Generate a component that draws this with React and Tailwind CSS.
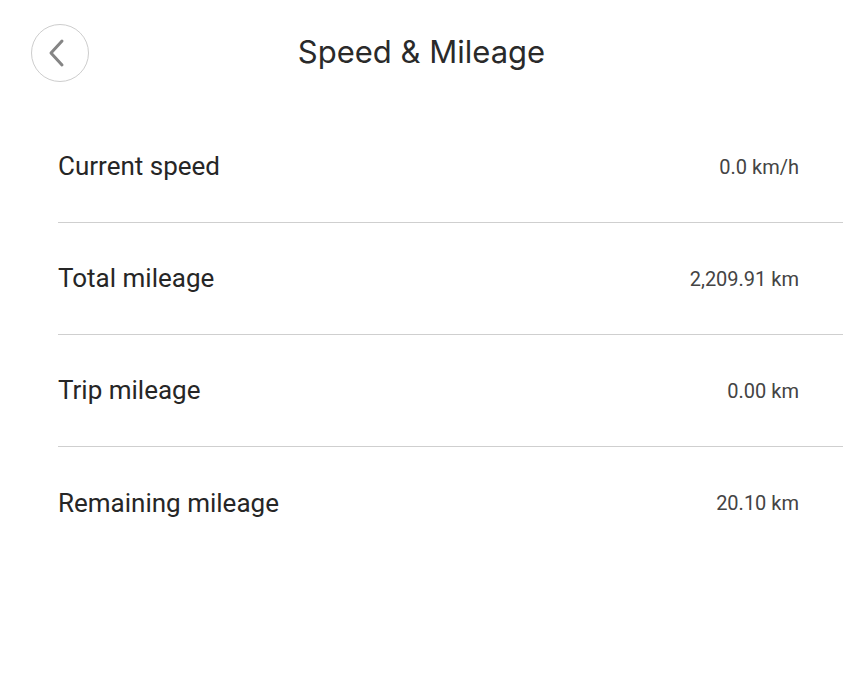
export default function App() {
  const rows = [
    ["Current speed", "0.0 km/h"],
    ["Total mileage", "2,209.91 km"],
    ["Trip mileage", "0.00 km"],
    ["Remaining mileage", "20.10 km"],
  ];
  return (
    <div className="w-[843px] h-[699px] bg-white overflow-hidden" style={{ fontFamily: "Roboto, 'Noto Sans', sans-serif" }}>
      <div className="relative h-[111px] flex items-start justify-center pt-[32px]">
        <button className="absolute left-[31px] top-[24px] w-[58px] h-[58px] rounded-full border-[1.5px] border-[#cdcdcd] flex items-center justify-center">
          <svg width="20" height="30" viewBox="0 0 20 30" fill="none" className="-ml-[6px]">
            <path d="M15 3 L4 15 L15 27" stroke="#858585" strokeWidth="3" strokeLinecap="round" strokeLinejoin="round" />
          </svg>
        </button>
        <h1 className="text-[31px] leading-[40px] text-[#2a2a2a]" style={{ fontFamily: "Inter, 'Liberation Sans', sans-serif" }}>Speed &amp; Mileage</h1>
      </div>
      <div className="pl-[58px]">
        {rows.map(([label, value], i) => (
          <div key={label} className={`h-[112px] flex items-center justify-between pr-[44px] ${i < rows.length - 1 ? "border-b border-[#cfcfcf]" : ""}`}>
            <span className="text-[26px] text-[#262626]">{label}</span>
            <span className="text-[20px] text-[#444]">{value}</span>
          </div>
        ))}
      </div>
    </div>
  );
}
